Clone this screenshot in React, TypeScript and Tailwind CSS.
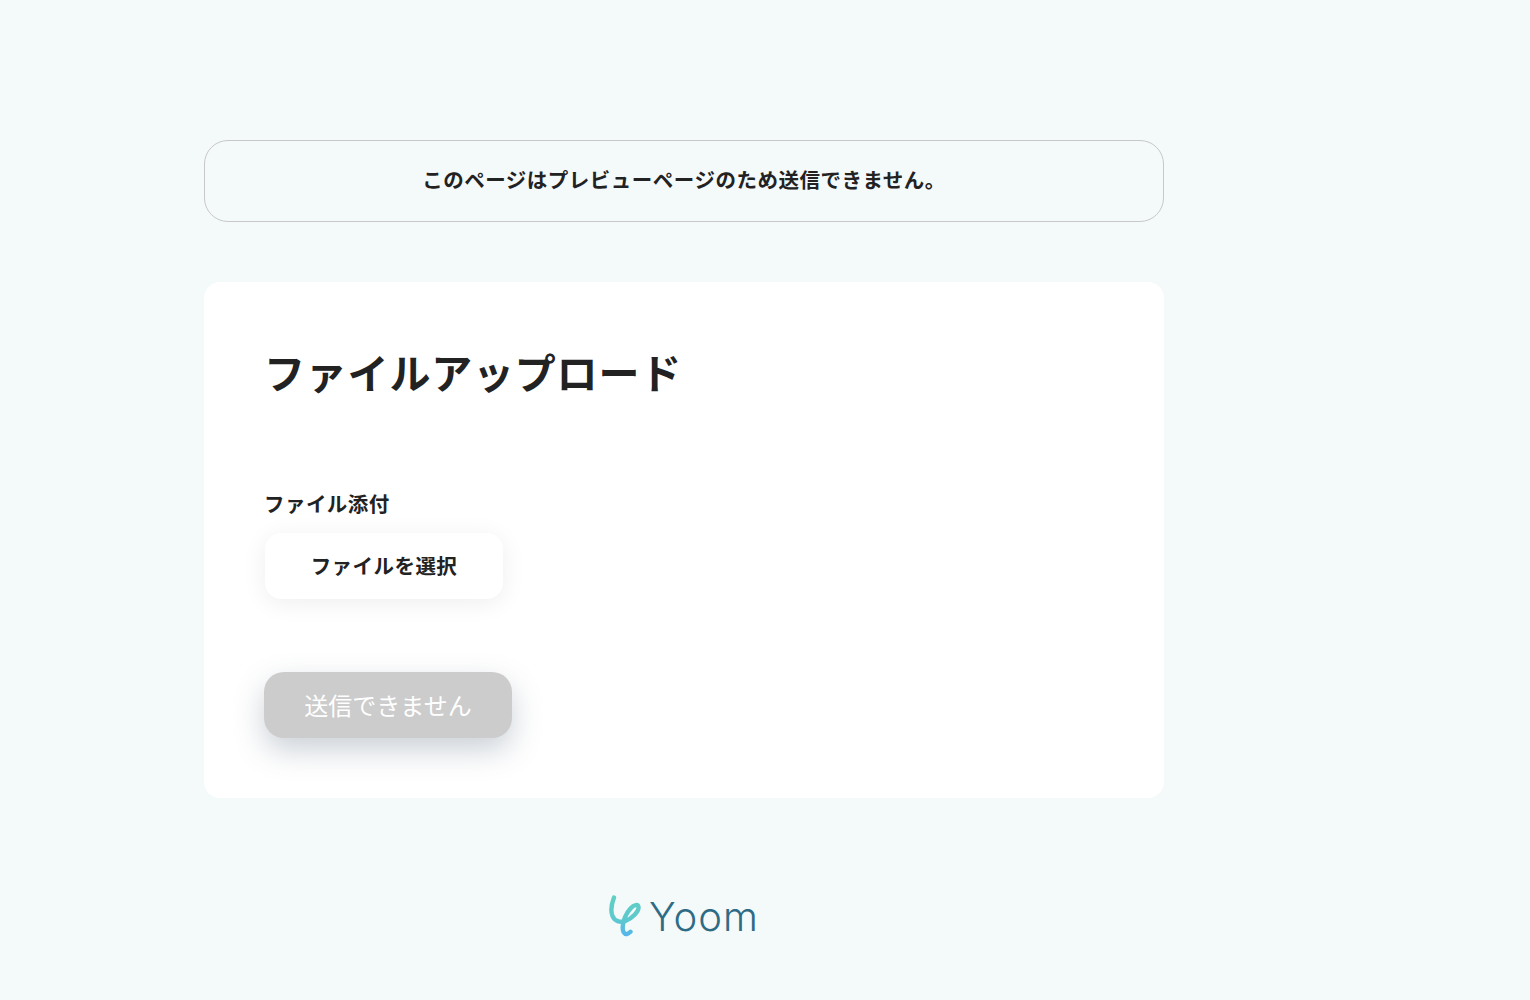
export default function App() {
  return (
    <div className="min-h-[1000px] bg-[#f4f9fa] pt-[140px] pl-[204px] text-[#222222] [font-family:'Noto_Sans_CJK_JP','Noto_Sans',sans-serif]">
      <div className="flex w-[960px] flex-col">
        <div className="flex h-[82px] items-center justify-center rounded-[24px] border border-[#c8c8c8] pb-[4px] text-[20.5px] leading-none font-bold tracking-[0.5px]">
          このページはプレビューページのため送信できません。
        </div>
        <div className="mt-[60px] flex h-[516px] flex-col items-start rounded-[16px] bg-white px-[60px] pt-[59px]">
          <h1 className="text-[41px] leading-[60px] font-bold tracking-[0.8px]">ファイルアップロード</h1>
          <div className="mt-[86px] text-[20.5px] leading-[32px] font-bold tracking-[0.45px]">ファイル添付</div>
          <button className="mt-[14px] ml-px flex h-[66px] w-[238px] items-center justify-center rounded-[16px] bg-white pb-[2px] text-[20.5px] font-bold tracking-[0.45px] shadow-[0_4px_24px_rgba(0,0,0,0.07)]">
            ファイルを選択
          </button>
          <button className="mt-[73px] flex h-[66px] w-[248px] items-center justify-center rounded-[20px] bg-[#cccccc] text-[24px] text-white shadow-[0_12px_30px_rgba(70,90,110,0.28)]">
            送信できません
          </button>
        </div>
        <div className="mt-[94px] flex items-center justify-center">
          <svg width="34" height="44" viewBox="0 0 34 44" className="mr-[6px]" fill="none">
            <defs>
              <linearGradient id="yoomGrad" gradientUnits="userSpaceOnUse" x1="0" y1="0" x2="0" y2="44">
                <stop offset="0" stopColor="#62d0c0" />
                <stop offset="0.6" stopColor="#5cc8cf" />
                <stop offset="1" stopColor="#55b2f0" />
              </linearGradient>
            </defs>
            <path
              d="M5 3.5C2.5 10 1.5 17 3.5 22C5.5 27 11 29 16.5 27C23 24.5 30 17.5 29.5 13C29 10 25 10.5 21.5 14.5C17.5 19 14.5 26 13.8 32C13.2 38 15.5 40.5 18 40C19.5 39.7 20.5 38.8 21.5 37.8"
              stroke="url(#yoomGrad)"
              strokeWidth="4.4"
              strokeLinecap="round"
              strokeLinejoin="round"
            />
          </svg>
          <span className="mt-[3px] text-[40px] leading-[44px] font-light tracking-[1px] text-[#2e6b85] [font-family:Inter,sans-serif]">Yoom</span>
        </div>
      </div>
    </div>
  );
}
